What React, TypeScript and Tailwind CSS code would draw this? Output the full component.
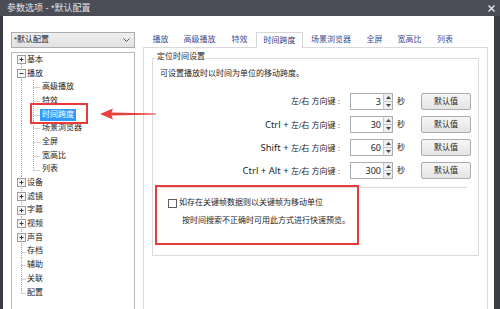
import React from "react";

type Node = {
  label: string;
  level: 0 | 1;
  exp?: "+" | "-";
  sel?: boolean;
  first?: boolean;
  last?: boolean;
  lastChild?: boolean;
};

const tree: Node[] = [
  { label: "基本", level: 0, exp: "+", first: true },
  { label: "播放", level: 0, exp: "-" },
  { label: "高级播放", level: 1 },
  { label: "特效", level: 1 },
  { label: "时间跨度", level: 1, sel: true },
  { label: "场景浏览器", level: 1 },
  { label: "全屏", level: 1 },
  { label: "宽高比", level: 1 },
  { label: "列表", level: 1, lastChild: true },
  { label: "设备", level: 0, exp: "+" },
  { label: "滤镜", level: 0, exp: "+" },
  { label: "字幕", level: 0, exp: "+" },
  { label: "视频", level: 0, exp: "+" },
  { label: "声音", level: 0, exp: "+" },
  { label: "存档", level: 0 },
  { label: "辅助", level: 0 },
  { label: "关联", level: 0 },
  { label: "配置", level: 0, last: true },
];

const H = 13.7;
const C = H / 2;
const dot = { stroke: "#a5a5a5", strokeWidth: 1, strokeDasharray: "1 1" };

function Connector({ n }: { n: Node }) {
  const w = n.level === 0 ? 15 : 30;
  return (
    <svg width={w} height={H} className="shrink-0 block">
      {n.level === 0 ? (
        <>
          <line x1={9.5} x2={9.5} y1={n.first ? C : 0} y2={n.last ? C : H} {...dot} />
          {n.exp ? (
            <>
              <rect x={5.5} y={2.5} width={8} height={8} fill="#f6f6f6" stroke="#9c9c9c" />
              <line x1={7.5} x2={11.5} y1={6.5} y2={6.5} stroke="#3a3a3a" />
              {n.exp === "+" && <line x1={9.5} x2={9.5} y1={4.5} y2={8.5} stroke="#3a3a3a" />}
            </>
          ) : (
            <line x1={9.5} x2={14} y1={7.5} y2={7.5} {...dot} />
          )}
        </>
      ) : (
        <>
          <line x1={9.5} x2={9.5} y1={0} y2={H} {...dot} />
          <line x1={21.5} x2={21.5} y1={0} y2={n.lastChild ? C : H} {...dot} />
          <line x1={21.5} x2={28} y1={7.5} y2={7.5} {...dot} />
        </>
      )}
    </svg>
  );
}

const tabs = [
  { t: "播放", w: "w-[31px]" },
  { t: "高级播放", w: "w-[47px]" },
  { t: "特效", w: "w-[33px]" },
  { t: "时间跨度", w: "w-[47px]", sel: true },
  { t: "场景浏览器", w: "w-[56px]" },
  { t: "全屏", w: "w-[31px]" },
  { t: "宽高比", w: "w-[39px]" },
  { t: "列表", w: "w-[32px]" },
];

const rows = [
  { pre: "", v: "3" },
  { pre: "Ctrl + ", v: "30" },
  { pre: "Shift + ", v: "60" },
  { pre: "Ctrl + Alt + ", v: "300" },
];

function Spin({ v }: { v: string }) {
  return (
    <div className="ml-[10px] w-[43px] h-[17px] border border-[#abadb3] bg-white flex">
      <div className="flex-1 flex items-center justify-end pr-[2px] text-[9px] font-['Noto_Sans',sans-serif]">{v}</div>
      <div className="w-[9px] flex flex-col border-l border-[#c9c9c9] bg-[#efefef]">
        <div className="flex-1 flex items-center justify-center border-b border-[#c9c9c9]">
          <svg width="5" height="3"><polygon points="0,3 5,3 2.5,0" fill="#444" /></svg>
        </div>
        <div className="flex-1 flex items-center justify-center">
          <svg width="5" height="3"><polygon points="0,0 5,0 2.5,3" fill="#444" /></svg>
        </div>
      </div>
    </div>
  );
}

export default function App() {
  return (
    <div className="relative w-[500px] h-[309px] overflow-hidden bg-[#3b3d45] flex flex-col font-['Liberation_Sans','Noto_Sans_CJK_SC',sans-serif] text-[8px] text-[#1e1e1e] leading-none">
      {/* title bar */}
      <div className="h-[16px] shrink-0 bg-[#4a4d56] flex items-center pl-[7px] pr-[5px]">
        <span className="text-[9px] text-[#e2e3e6]">参数选项 - *默认配置</span>
        <svg width="7" height="7" className="ml-auto">
          <path d="M0.5 0.5 L6.5 6.5 M6.5 0.5 L0.5 6.5" stroke="#e8e8ea" strokeWidth="1.4" />
        </svg>
      </div>

      {/* body */}
      <div className="flex-1 min-h-0 ml-[3px] mr-[6px] bg-white flex overflow-hidden">
        {/* left column */}
        <div className="w-[132px] shrink-0 pl-[8px] pt-[16px] flex flex-col">
          <div className="w-[124px] h-[16px] shrink-0 border border-[#adadad] bg-gradient-to-b from-[#efefef] to-[#e2e2e2] flex items-center pl-[2px] pr-[4px]">
            <span>*默认配置</span>
            <svg width="7" height="4" className="ml-auto">
              <path d="M0.5 0.5 L3.5 3.5 L6.5 0.5" stroke="#555" fill="none" />
            </svg>
          </div>
          <div className="mt-[4px] w-[124px] h-[300px] shrink-0 border border-[#b9b9b9] bg-white flex flex-col">
            {tree.map((n) => (
              <div key={n.label} className="h-[13.7px] shrink-0 flex items-center">
                <Connector n={n} />
                {n.sel ? (
                  <span className="-ml-[2px] px-[2px] h-[12px] flex items-center bg-[#3399ff] text-white">{n.label}</span>
                ) : (
                  <span>{n.label}</span>
                )}
              </div>
            ))}
          </div>
        </div>

        {/* right column */}
        <div className="w-[345px] shrink-0 ml-[8px] pt-[16px] flex flex-col">
          <div className="h-[15px] shrink-0 flex items-end pl-[2px]">
            {tabs.map((t) =>
              t.sel ? (
                <div
                  key={t.t}
                  className={`${t.w} h-[16px] -mb-[1px] relative z-10 bg-white border border-b-0 border-[#d6d6d6] flex items-center justify-center text-[#2e3c78]`}
                >
                  {t.t}
                </div>
              ) : (
                <div key={t.t} className={`${t.w} h-[15px] flex items-center justify-center text-[#3d4b8f]`}>
                  {t.t}
                </div>
              )
            )}
          </div>
          <div className="h-[300px] shrink-0 border border-[#d9d9d9] pt-[10px] px-[8px]">
            <div className="relative h-[198px] border border-[#dcdcdc] pt-[9px] px-[7px] flex flex-col">
              <span className="absolute left-[3px] -top-[6px] bg-white px-[1px] h-[8px]">定位时间设置</span>
              <div className="h-[12px] flex items-center">可设置播放时以时间为单位的移动跨度。</div>
              <div className="mt-[13px] flex flex-col gap-[6px]">
                {rows.map((r) => (
                  <div key={r.v} className="h-[17px] flex items-center">
                    <div className="flex-1 text-right">
                      {r.pre && <span className="text-[9.5px] font-['Noto_Sans',sans-serif]">{r.pre}</span>}
                      左/右 方向键 :
                    </div>
                    <Spin v={r.v} />
                    <span className="ml-[4px] w-[8px]">秒</span>
                    <div className="ml-[16px] w-[50px] h-[17px] border border-[#acacac] rounded-[2px] bg-gradient-to-b from-[#f6f6f6] to-[#e4e4e4] flex items-center justify-center">
                      默认值
                    </div>
                  </div>
                ))}
              </div>
              <div className="mt-[8px] h-px bg-[#dcdcdc] mr-[4px]" />
              <div className="mt-[9px] h-[12px] flex items-center">
                <div className="ml-[8px] w-[9px] h-[9px] border border-[#5c5c5c] bg-white" />
                <span className="ml-[2px]">如存在关键帧数据则以关键帧为移动单位</span>
              </div>
              <div className="mt-[6px] h-[12px] flex items-center pl-[22px]">按时间搜索不正确时可用此方式进行快速预览。</div>
            </div>
          </div>
        </div>
      </div>

      {/* annotations */}
      <div className="absolute left-[30px] top-[103px] w-[58px] h-[21px] border-2 border-[#e63a3d]" />
      <div className="absolute left-[155px] top-[185px] w-[204px] h-[60px] border-2 border-[#e63a3d]" />
      <svg className="absolute left-[98px] top-[106px]" width="60" height="16">
        <polygon points="2,8 15,2.5 13.5,6.6 58,7.6 58,8.4 13.5,9.4 15,13.5" fill="#e8403f" />
      </svg>
    </div>
  );
}
